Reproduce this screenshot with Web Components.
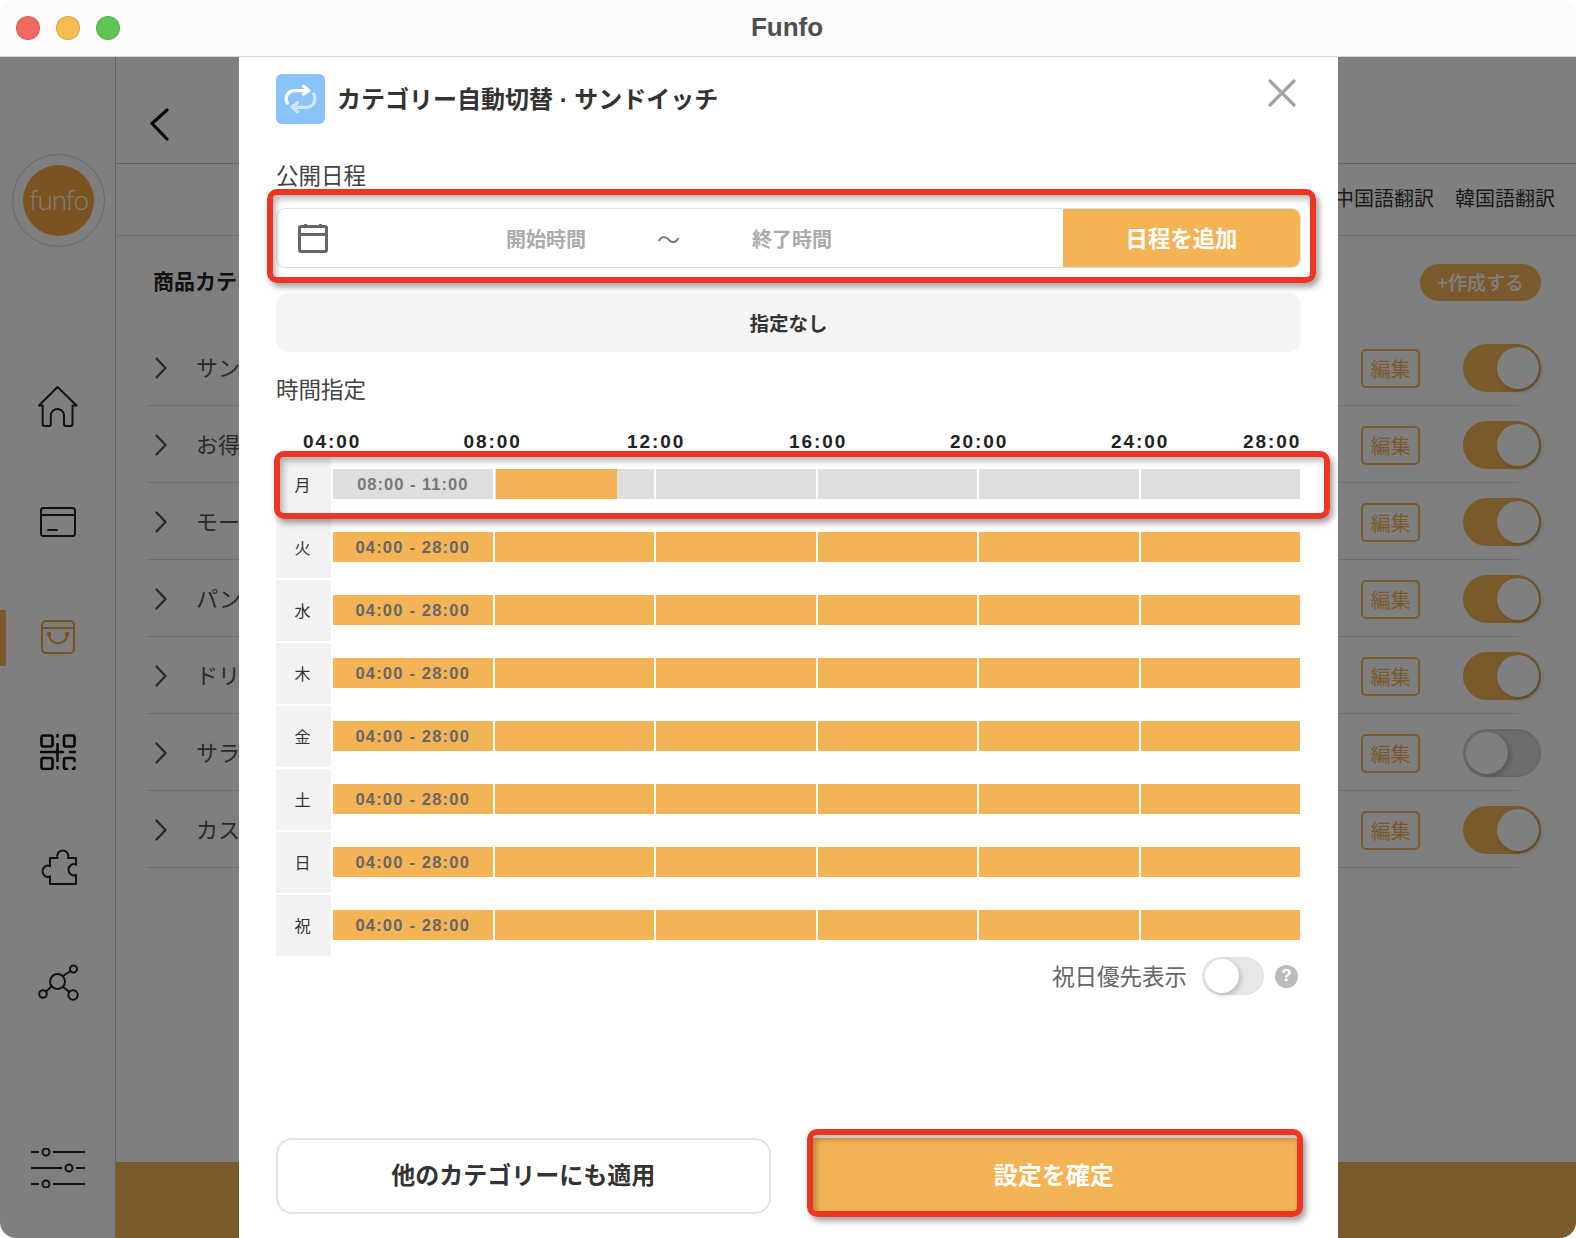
<!DOCTYPE html>
<html lang="ja">
<head>
<meta charset="utf-8">
<title>Funfo</title>
<style>
  html, body { margin: 0; background: #fff; }
  body { font-family: "Liberation Sans", "Noto Sans CJK JP", sans-serif; color: #222; }
</style>
</head>
<body>
<app-window>
  <side-nav></side-nav>
  <category-page></category-page>
  <schedule-modal></schedule-modal>
</app-window>

<script>
const JP = `"Noto Sans CJK JP", "Liberation Sans", sans-serif`;
const LATIN = `"Liberation Sans", "Noto Sans CJK JP", sans-serif`;

class AppWindow extends HTMLElement {
  constructor() {
    super();
    this.attachShadow({ mode: 'open' });
    this.shadowRoot.innerHTML = `
      <style>
        :host { display: block; width: 1576px; height: 1238px; position: relative; overflow: hidden;
                border-radius: 14px 14px 16px 16px; background: #fff; }
        .bar { height: 56px; background: #fdfbfb; border-bottom: 1px solid #d6d6d6; display: flex; align-items: center;
               position: relative; box-sizing: content-box; }
        .lights { display: flex; gap: 16px; padding-left: 16px; }
        .lights i { width: 24px; height: 24px; border-radius: 50%; box-sizing: border-box; border: 1px solid rgba(0,0,0,.12); display: block; }
        .title { position: absolute; left: 0; right: 2px; top: 0; bottom: 1px; display: flex; align-items: center; justify-content: center;
                 font: 700 26px ${LATIN}; color: #4e4e4e; }
        .body { display: flex; height: 1181px; }
        .dim { position: absolute; left: 0; right: 0; top: 57px; bottom: 0; background: rgba(0,0,0,.5); }
        ::slotted(schedule-modal) { position: absolute; left: 239px; top: 57px; }
      </style>
      <div class="bar">
        <div class="lights">
          <i style="background:#ee6a5f"></i><i style="background:#f5bd4f"></i><i style="background:#61c554"></i>
        </div>
        <div class="title">Funfo</div>
      </div>
      <div class="body"><slot></slot></div>
      <div class="dim"></div>
      <slot name="top"></slot>
    `;
  }
  connectedCallback() {
    const m = this.querySelector('schedule-modal');
    if (m) m.slot = 'top';
  }
}

class SideNav extends HTMLElement {
  constructor() {
    super();
    this.attachShadow({ mode: 'open' });
    this.shadowRoot.innerHTML = `
      <style>
        :host { display: flex; flex-direction: column; align-items: center; width: 115px; flex: none; box-sizing: content-box;
                border-right: 1px solid #c4c4c4; position: relative; --act: #f0a23c; }
        .logo { width: 93px; height: 93px; margin-top: 97px; margin-left: 2px; border-radius: 50%; border: 1.5px solid #cfcfcf; box-sizing: border-box;
                display: flex; align-items: center; justify-content: center; }
        .logo span { width: 71px; height: 71px; border-radius: 50%; background: #f4a641; display: flex; align-items: center; justify-content: center;
                     box-sizing: border-box; padding-bottom: 4px; font: 300 28px Lato, "Open Sans", sans-serif; color: #fff; letter-spacing: -1.2px; }
        .cell { height: 115px; display: flex; align-items: center; justify-content: center; flex: none; }
        .first { margin-top: 102.5px; }
        svg { fill: none; stroke: #222; stroke-width: 2; stroke-linecap: round; stroke-linejoin: round; display: block; }
        .active svg { stroke: var(--act); }
        .mark { position: absolute; left: 0; top: 553px; width: 6px; height: 56px; background: #f4b456; }
        .bottom { margin-top: auto; padding-bottom: 50px; }
      </style>
      <div class="logo"><span>funfo</span></div>
      <div class="cell first">
        <svg width="40" height="42" viewBox="0 0 40 42"><path d="M1 19.5 19.5 1l19 18.5h-4V38a2 2 0 0 1-2 2H28a2 2 0 0 1-2-2V29.5a6.6 6.6 0 0 0-13.2 0V38a2 2 0 0 1-2 2H6.7a2 2 0 0 1-2-2V19.5Z"/></svg>
      </div>
      <div class="cell">
        <svg width="36" height="30" viewBox="0 0 36 30"><rect x="1" y="1" width="34" height="28" rx="2.5"/><path d="M1 8h34M8 23h9"/></svg>
      </div>
      <div class="cell active">
        <svg width="34" height="34" viewBox="0 0 34 34"><rect x="1" y="1" width="32" height="32" rx="4"/><path d="M1 8h32M8 14.500c0 11.500 18 11.500 18 0"/><circle cx="8" cy="14" r="1.200" fill="#f0a23c"/><circle cx="26" cy="14" r="1.200" fill="#f0a23c"/></svg>
      </div>
      <div class="cell">
        <svg width="36" height="36" viewBox="0 0 36 36" style="stroke-width:2.6;stroke:#111">
          <rect x="1.500" y="1.500" width="11" height="11" rx="2"/><rect x="24" y="1.500" width="10.500" height="11" rx="2"/><rect x="1.500" y="24" width="11" height="11" rx="2"/>
          <path d="M17.500 1v1.500M17.500 10v17M17.500 33v1.500M1 18h22M30 18h5M27 35h-1a2 2 0 0 1-2-2v-7a2 2 0 0 1 2-2h6.500a2 2 0 0 1 2 2v1M34.500 33.500 34 35h-1"/>
        </svg>
      </div>
      <div class="cell">
        <svg width="37" height="36" viewBox="0 0 37 36" style="margin-left:3px"><path d="M9 35v-7.500a5.600 5.600 0 1 1 0-10.500V9h7.500a5.600 5.600 0 1 1 10.500 0h8v6.500a5.600 5.600 0 1 0 0 10.500V35Z" stroke-linejoin="miter"/></svg>
      </div>
      <div class="cell">
        <svg width="42" height="40" viewBox="0 0 42 40"><circle cx="20.500" cy="19.500" r="7.500"/><circle cx="36.500" cy="7" r="3.500"/><circle cx="6" cy="32" r="3.800"/><circle cx="36" cy="33" r="4.700"/><path d="M26 14l7.500-5M14.500 24.500 9 29.500M26 25l6.500 5"/></svg>
      </div>
      <div class="bottom">
        <svg width="54" height="40" viewBox="0 0 54 40" style="stroke-linecap:butt"><path d="M0 4h8M22 4h32M0 20h31M45 20h9M0 36h8M22 36h32"/><circle cx="15" cy="4" r="3.500"/><circle cx="38" cy="20" r="3.500"/><circle cx="15" cy="36" r="3.500"/></svg>
      </div>
      <div class="mark"></div>
    `;
  }
}

class ToggleSwitch extends HTMLElement {
  constructor() {
    super();
    this.attachShadow({ mode: 'open' });
    this.shadowRoot.innerHTML = `
      <style>
        :host { display: block; width: var(--w, 78px); height: var(--h, 48px); border-radius: 999px; box-sizing: border-box;
                background: var(--off, #d8d8d8); border: 2px solid var(--off-b, #cfcfcf); position: relative; flex: none; }
        :host([on]) { background: #f4b456; border-color: #f4b456; }
        i { position: absolute; top: 50%; left: 1px; transform: translateY(-50%); width: var(--k, 42px); height: var(--k, 42px);
            border-radius: 50%; background: #fff; box-shadow: 2px 2px 5px rgba(0,0,0,.22); }
        :host([on]) i { left: auto; right: 0; }
      </style>
      <i></i>
    `;
  }
}

class CategoryRow extends HTMLElement {
  constructor() {
    super();
    this.attachShadow({ mode: 'open' });
    this.shadowRoot.innerHTML = `
      <style>
        :host { display: flex; align-items: center; height: 76px; box-sizing: content-box; border-bottom: 1px solid #dcdcdc; }
        .in { display: flex; align-items: center; width: 100%; padding-top: 2px; }
        svg { fill: none; stroke: #555; stroke-width: 2.4; stroke-linecap: round; stroke-linejoin: round; margin-left: 7.5px; }
        .name { margin-left: 29.5px; font: 400 22px ${JP}; color: #555; white-space: nowrap; margin-top: -5px; }
        .edit { margin-left: auto; width: 59px; height: 39px; box-sizing: border-box; border: 2px solid #f4b456; border-radius: 5px;
                color: #f4b456; font: 400 20px ${JP}; display: flex; align-items: center; justify-content: center; }
        toggle-switch { margin-left: 43px; margin-right: -22px; }
      </style>
      <div class="in">
        <svg width="12" height="22" viewBox="0 0 12 22"><path d="M1.500 1.500 10.500 11 1.500 20.500"/></svg>
        <span class="name"></span>
        <span class="edit">編集</span>
        <toggle-switch></toggle-switch>
      </div>
    `;
  }
  connectedCallback() {
    this.shadowRoot.querySelector('.name').textContent = this.getAttribute('name');
    if (this.hasAttribute('on')) this.shadowRoot.querySelector('toggle-switch').setAttribute('on', '');
  }
}

class CategoryPage extends HTMLElement {
  constructor() {
    super();
    this.attachShadow({ mode: 'open' });
    this.shadowRoot.innerHTML = `
      <style>
        :host { display: flex; flex-direction: column; flex: 1; min-width: 0; }
        .top { height: 106px; flex: none; border-bottom: 1px solid #c8c8c8; display: flex; align-items: center; box-sizing: content-box; }
        .top svg { margin-left: 33px; margin-top: 30px; fill: none; stroke: #111; stroke-width: 3.200; stroke-linecap: round; stroke-linejoin: round; }
        .sub { height: 72px; flex: none; border-bottom: 1px solid #dcdcdc; display: flex; align-items: center; justify-content: flex-end; gap: 21px;
               padding-right: 21px; padding-bottom: 4px; box-sizing: border-box; font: 400 20px ${JP}; color: #333; }
        .head { display: flex; align-items: center; justify-content: space-between; height: 37px; margin: 28px 35px 0 37px; }
        .head b { font: 700 21px ${JP}; color: #222; white-space: nowrap; margin-top: -5px; }
        .make { width: 121px; height: 37px; border-radius: 19px; background: #f4b456; color: #fff; opacity: .98; font: 500 19px ${JP};
                display: flex; align-items: center; justify-content: center; box-sizing: border-box; padding-bottom: 2px; }
        .list { margin: 28px 57px 0 31px; display: block; }
        .foot { margin-top: auto; height: 76px; flex: none; background: #f4b456; }
      </style>
      <div class="top"><svg width="21" height="34" viewBox="0 0 21 34"><path d="M18 2 3 15.500 18 31"/></svg></div>
      <div class="sub"><span>中国語翻訳</span><span>韓国語翻訳</span></div>
      <div class="head"><b>商品カテ</b><span class="make">+作成する</span></div>
      <div class="list">
        <category-row name="サン" on></category-row>
        <category-row name="お得" on></category-row>
        <category-row name="モー" on></category-row>
        <category-row name="パン" on></category-row>
        <category-row name="ドリ" on></category-row>
        <category-row name="サラ"></category-row>
        <category-row name="カス" on></category-row>
      </div>
      <div class="foot"></div>
    `;
  }
}

class DayRow extends HTMLElement {
  constructor() {
    super();
    this.attachShadow({ mode: 'open' });
    this.shadowRoot.innerHTML = `
      <style>
        :host { display: flex; gap: 2px; height: 61px; }
        .day { width: 55px; flex: none; background: #f2f2f2; display: flex; align-items: center; justify-content: center; box-sizing: border-box;
               padding: 0 2px 2px 0; font: 400 16px ${JP}; color: #333; }
        .track { width: 967px; height: 30px; margin-top: 15px; display: grid; grid-template-columns: repeat(6, 1fr); gap: 2px; position: relative; }
        .track i { display: flex; align-items: center; justify-content: center; background: #f4b456; padding-top: 1px; box-sizing: border-box;
                   font: 700 16.500px ${LATIN}; letter-spacing: 1.200px; color: #666; font-style: normal; white-space: nowrap; }
        :host([partial]) .track i { background: #dedede; color: #777; letter-spacing: 1px; }
        .fill { display: none; position: absolute; left: 163px; top: 0; bottom: 0; width: 121px; background: #f4b456; }
        :host([partial]) .fill { display: block; }
      </style>
      <div class="day"></div>
      <div class="track">
        <i class="label"></i><i></i><i></i><i></i><i></i><i></i>
        <div class="fill"></div>
      </div>
    `;
  }
  connectedCallback() {
    this.shadowRoot.querySelector('.day').textContent = this.getAttribute('day');
    this.shadowRoot.querySelector('.label').textContent = this.getAttribute('label');
  }
}

class RedMark extends HTMLElement {
  constructor() {
    super();
    this.attachShadow({ mode: 'open' });
    this.shadowRoot.innerHTML = `
      <style>
        :host { display: block; position: absolute; box-sizing: border-box; border: 6px solid #ee3524; border-radius: 10px; pointer-events: none;
                box-shadow: 3px 4px 6px rgba(0,0,0,.38), inset 3px 4px 6px rgba(0,0,0,.28); }
      </style>
    `;
  }
}

class ScheduleModal extends HTMLElement {
  constructor() {
    super();
    this.attachShadow({ mode: 'open' });
    this.shadowRoot.innerHTML = `
      <style>
        :host { display: flex; flex-direction: column; width: 1099px; height: 1181px; box-sizing: border-box; background: #fff;
                padding: 17px 37px 24px; }
        .head { display: flex; align-items: center; height: 50px; flex: none; }
        .appicon { width: 49px; height: 50px; border-radius: 6px; background: #8ac3fb; flex: none; }
        .appicon svg { display: block; fill: none; stroke-width: 3.400; stroke-linecap: round; stroke-linejoin: round; }
        h1 { margin: -4px 0 0 12px; font: 700 24px ${LATIN}; color: #333; white-space: nowrap; }
        .close { margin-left: auto; margin-right: 4px; margin-top: -13px; fill: none; stroke: #a3a3a3; stroke-width: 3.200; stroke-linecap: round; }
        .lab { font: 400 22.500px/30px ${JP}; color: #444; height: 30px; flex: none; }
        .lab.a { margin-top: 35px; }
        .lab.b { margin-top: 21px; }
        .range { margin-top: 19px; height: 60px; flex: none; box-sizing: border-box; border: 1px solid #e0e0e0; border-radius: 9px; display: flex; align-items: center; overflow: hidden; }
        .range svg { margin-left: 21px; fill: none; stroke: #666; stroke-width: 3; flex: none; }
        .range span { font: 700 20px ${JP}; color: #ababab; white-space: nowrap; }
        .range .s { margin-left: 178px; }
        .range .t { margin-left: 71px; font: 400 23px ${JP}; color: #777; width: 22px; }
        .range .e { margin-left: 73px; }
        .range .add { margin-left: auto; width: 237px; height: 100%; background: #f4b456; color: #fff; font: 700 22.400px ${JP}; display: flex; align-items: center; justify-content: center; box-sizing: border-box; padding-bottom: 2px; }
        .none { margin-top: 25px; height: 59px; flex: none; background: #f4f4f4; border-radius: 13px; display: flex; align-items: center; justify-content: center; font: 700 19.500px ${JP}; color: #333; }
        .hours { margin-top: 27px; height: 24px; flex: none; padding-left: 27px; display: grid; grid-template-columns: 160.500px 163.500px 162px 161px 161px 132px auto;
                 font: 700 19px/24px ${LATIN}; letter-spacing: 1.900px; color: #222; }
        .rows { display: flex; flex-direction: column; gap: 2px; flex: none; }
        .opt { display: flex; align-items: center; justify-content: flex-end; height: 38px; margin-top: 1px; flex: none; font: 400 22.500px ${JP}; color: #666; --w: 62px; --h: 38px; --k: 34px; --off: #e8e8e8; --off-b: #e4e4e4; }
        .opt .txt { margin-top: -2px; }
        .opt toggle-switch { margin-left: 15px; }
        .q { width: 23px; height: 23px; margin: 0 3px 0 11px; border-radius: 50%; background: #bcbcbc; color: #fff; font: 700 17px ${LATIN}; display: flex; align-items: center; justify-content: center; }
        .btns { margin-top: auto; display: flex; gap: 36px; flex: none; }
        .btn { width: 495px; height: 76px; box-sizing: border-box; border-radius: 16px; display: flex; align-items: center; justify-content: center; padding-bottom: 5px; font: 700 24px ${JP}; }
        .ghost { border: 2px solid #e4e4e4; color: #333; background: #fff; }
        .solid { background: #f4b456; color: #fff; border-radius: 8px; }
        .m1 { left: 28px; top: 132px; width: 1049px; height: 94px; }
        .m2 { left: 35px; top: 394px; width: 1056px; height: 68px; }
        .m3 { left: 568px; top: 1072px; width: 496px; height: 88px; }
      </style>
      <div class="head">
        <div class="appicon">
          <svg width="49" height="50" viewBox="0 0 50 50">
            <path stroke="#cfe5fb" d="M38.500 20c3.500 7-1 13.500-8 13.500H17M22 28.500l-5.500 5 5.500 4.500"/>
            <path stroke="#fff" d="M11.500 29c-3-6.500 1-12.500 8-12.500h13.500M28 12l5.500 4.500L28 20"/>
          </svg>
        </div>
        <h1>カテゴリー自動切替 · サンドイッチ</h1>
        <svg class="close" width="30" height="30" viewBox="0 0 30 30"><path d="M3 3l24 24M27 3 3 27"/></svg>
      </div>
      <div class="lab a">公開日程</div>
      <div class="range">
        <svg width="30" height="30" viewBox="0 0 30 30"><rect x="1.500" y="3.500" width="27" height="25" rx="1.500"/><path d="M1.500 11.500h27M7.500 1v4M22.500 1v4"/></svg>
        <span class="s">開始時間</span><span class="t">〜</span><span class="e">終了時間</span>
        <span class="add">日程を追加</span>
      </div>
      <div class="none">指定なし</div>
      <div class="lab b">時間指定</div>
      <div class="hours"><span>04:00</span><span>08:00</span><span>12:00</span><span>16:00</span><span>20:00</span><span>24:00</span><span>28:00</span></div>
      <div class="rows">
        <day-row day="月" label="08:00 - 11:00" partial></day-row>
        <day-row day="火" label="04:00 - 28:00"></day-row>
        <day-row day="水" label="04:00 - 28:00"></day-row>
        <day-row day="木" label="04:00 - 28:00"></day-row>
        <day-row day="金" label="04:00 - 28:00"></day-row>
        <day-row day="土" label="04:00 - 28:00"></day-row>
        <day-row day="日" label="04:00 - 28:00"></day-row>
        <day-row day="祝" label="04:00 - 28:00"></day-row>
      </div>
      <div class="opt"><span class="txt">祝日優先表示</span><toggle-switch></toggle-switch><span class="q">?</span></div>
      <div class="btns">
        <div class="btn ghost">他のカテゴリーにも適用</div>
        <div class="btn solid">設定を確定</div>
      </div>
      <red-mark class="m1"></red-mark>
      <red-mark class="m2"></red-mark>
      <red-mark class="m3"></red-mark>
    `;
  }
}

customElements.define('toggle-switch', ToggleSwitch);
customElements.define('category-row', CategoryRow);
customElements.define('category-page', CategoryPage);
customElements.define('side-nav', SideNav);
customElements.define('day-row', DayRow);
customElements.define('red-mark', RedMark);
customElements.define('schedule-modal', ScheduleModal);
customElements.define('app-window', AppWindow);
</script>
</body>
</html>
